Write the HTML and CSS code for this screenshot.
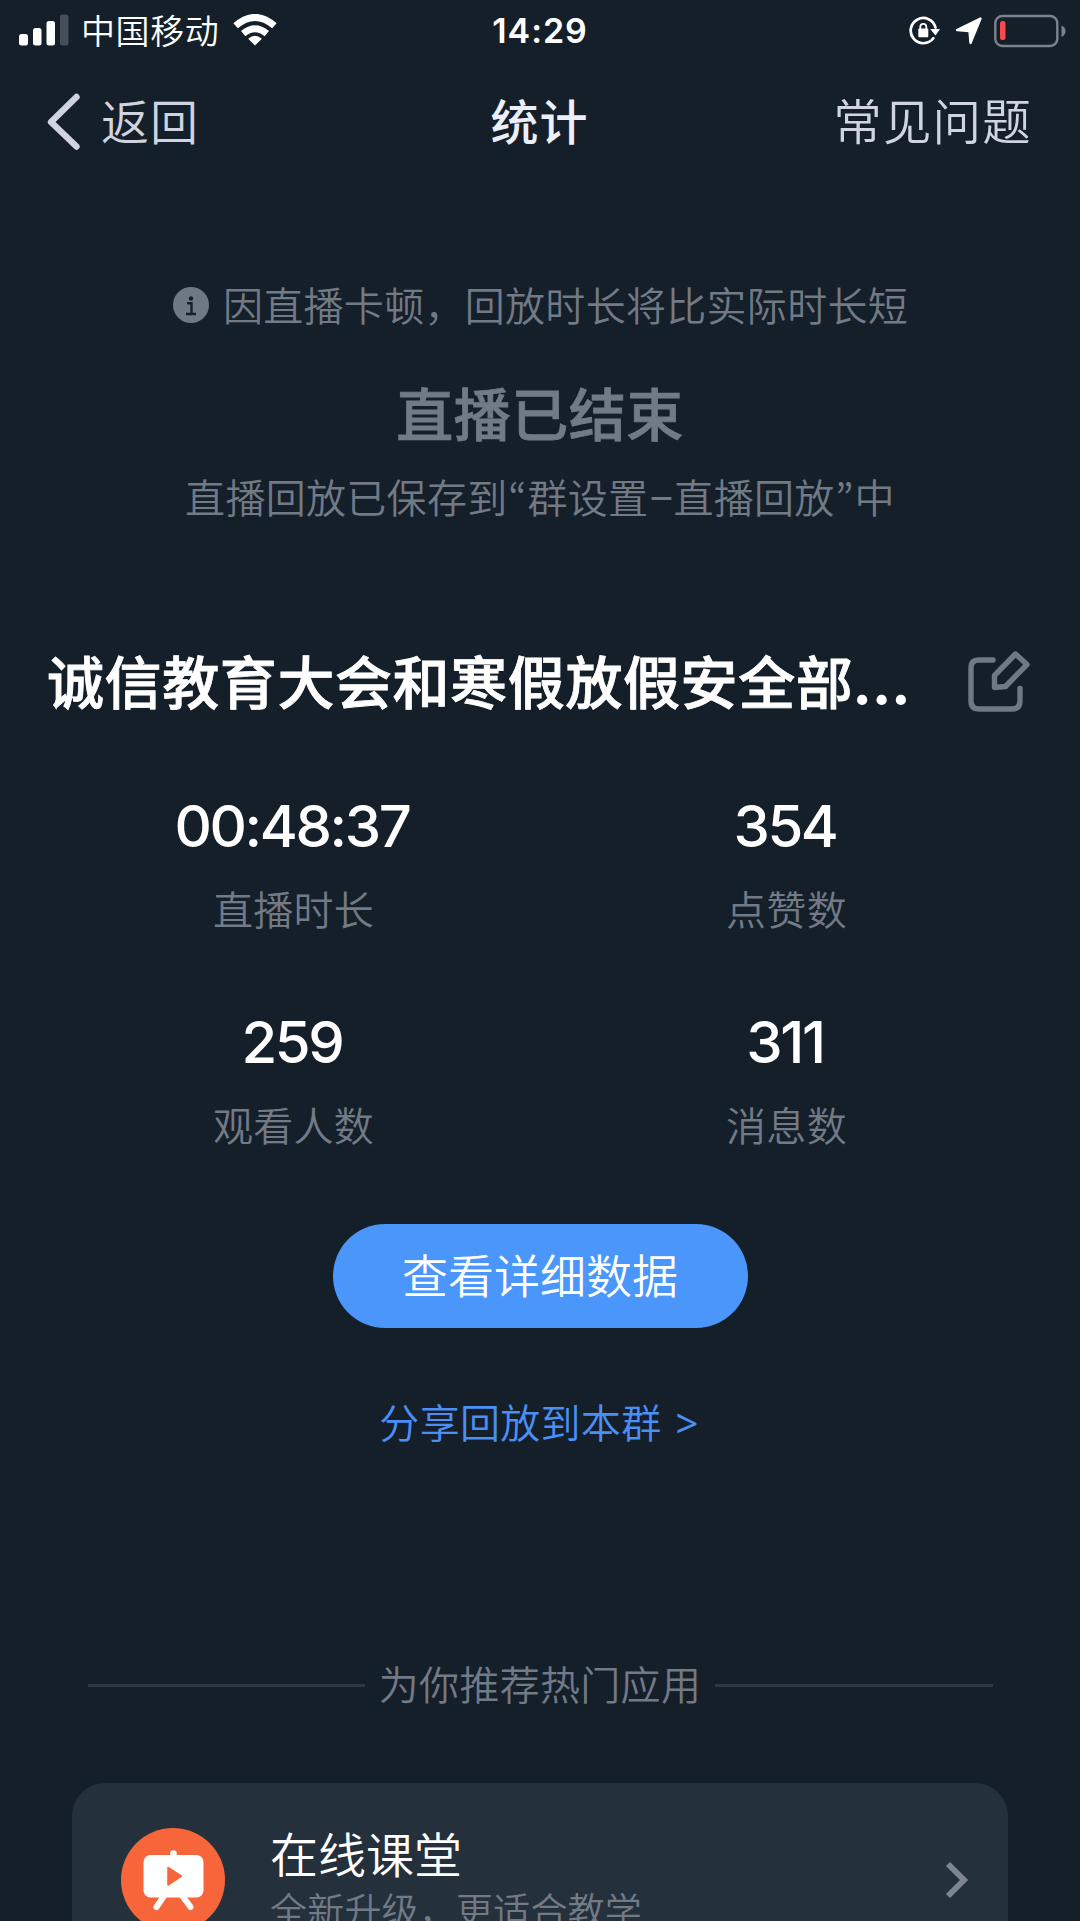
FILE: index.html
```html
<!DOCTYPE html>
<html lang="zh-CN">
<head>
<meta charset="utf-8">
<title>统计</title>
<link rel="stylesheet" href="styles.css">
</head>
<body>
<div class="status">
  <div class="status-left">
    <svg class="signal" width="50" height="32" viewBox="0 0 50 32" fill="#fff"><rect x="0" y="20" width="9" height="11.5" rx="2.5"/><rect x="14" y="14" width="8.5" height="17.500" rx="2.500"/><rect x="27.500" y="7" width="8.500" height="24.500" rx="2.500"/><rect x="41" y="0.500" width="8.500" height="31" rx="2.500" fill="#454e59"/></svg>
    <span class="carrier">中国移动</span>
    <svg width="44" height="32" viewBox="0 0 44 32"><path d="M22 31.500 15.200 24.700Q22 19 28.800 24.700Z" fill="#fff"/><path d="M10.200 19.700Q22 9.700 33.800 19.700" fill="none" stroke="#fff" stroke-width="6.800"/><path d="M2.600 11.800Q22 -5 41.400 11.800" fill="none" stroke="#fff" stroke-width="6.800"/></svg>
  </div>
  <time class="clock">14:29</time>
  <div class="status-right">
    <svg class="lock" width="32" height="30" viewBox="0 0 32 30"><path d="M24.300 22.300A12.600 12.600 0 1 1 26.500 11.500" fill="none" stroke="#fff" stroke-width="2.700" stroke-linecap="round"/><path d="M21.200 13H31L26.500 19.500Z" fill="#fff"/><rect x="9.300" y="12.500" width="10" height="8.800" rx="1" fill="#fff"/><path d="M11.300 13V10.800a3 3 0 0 1 6 0V13" fill="none" stroke="#fff" stroke-width="1.800"/></svg>
    <svg class="arrow" width="28" height="28" viewBox="0 0 28 28"><path d="M25.500 1.500 15.500 26 14.500 14 2 13Z" fill="#fff" stroke="#fff" stroke-width="2.400" stroke-linejoin="round"/></svg>
    <svg width="72" height="34" viewBox="0 0 72 34"><rect x="1.300" y="2" width="62" height="30" rx="7" fill="none" stroke="#7b828c" stroke-width="2.400"/><rect x="6" y="7" width="5.500" height="19" rx="2.500" fill="#fb4a4c"/><path d="M67.500 11.500Q71.500 13 71.500 17T67.500 23Z" fill="#7b828c"/></svg>
  </div>
</div>
<header class="nav">
  <a class="back">
    <svg width="34" height="58" viewBox="0 0 34 58"><path d="M29.500 4 4 29 29.500 53.500" fill="none" stroke="#cfd4e0" stroke-width="6.400" stroke-linecap="round" stroke-linejoin="round"/></svg>
    <span>返回</span>
  </a>
  <h1 class="nav-title">统计</h1>
  <a class="faq">常见问题</a>
</header>
<main>
  <p class="notice">
    <svg width="36" height="36" viewBox="0 0 36 36"><circle cx="18" cy="18" r="18" fill="#6f7985"/><circle cx="18" cy="11.500" r="2.200" fill="#15202b"/><path d="M14 16.300H18.500V26.500M13 27H23" fill="none" stroke="#15202b" stroke-width="2.400"/></svg>
    <span>因直播卡顿，回放时长将比实际时长短</span>
  </p>
  <h2 class="ended">直播已结束</h2>
  <p class="saved">直播回放已保存到<span class="mark">“</span>群设置<span class="dash">–</span>直播回放<span class="mark">”</span>中</p>
  <div class="live">
    <h3>诚信教育大会和寒假放假安全部<span class="dots">...</span></h3>
    <svg width="64" height="64" viewBox="0 0 64 64" fill="none" stroke="#6f7985" stroke-width="5.400" stroke-linecap="round" stroke-linejoin="round"><path d="M26 11H12Q4 11 4 19V52Q4 60 12 60H45Q53 60 53 52V39.500"/><path d="M48.500 5 60 15.500 38.500 37.500 27.500 38.500V26.500Z"/></svg>
  </div>
  <section class="stats">
    <div class="stat"><b>00:48:37</b><span>直播时长</span></div>
    <div class="stat"><b>354</b><span>点赞数</span></div>
    <div class="stat"><b>259</b><span>观看人数</span></div>
    <div class="stat"><b>311</b><span>消息数</span></div>
  </section>
  <button class="detail">查看详细数据</button>
  <a class="share">分享回放到本群<span class="gt">&gt;</span></a>
  <div class="divider"><span>为你推荐热门应用</span></div>
  <article class="card">
    <svg width="104" height="104" viewBox="0 0 104 104"><circle cx="52" cy="52" r="52" fill="#f7663a"/><rect x="22.500" y="27" width="60" height="42.500" rx="7" fill="#fff"/><circle cx="52.500" cy="25.500" r="3.300" fill="#fff"/><path d="M43 68 35.500 79M61.500 68 69.500 79" stroke="#fff" stroke-width="6" stroke-linecap="round"/><path d="M47 39.500V57L60.500 48.200Z" fill="#f7663a" stroke="#f7663a" stroke-width="1.500" stroke-linejoin="round"/></svg>
    <div class="card-text"><strong>在线课堂</strong><span>全新升级，更适合教学</span></div>
    <svg width="26" height="40" viewBox="0 0 26 40"><path d="M4 4 20 20 4 36" fill="none" stroke="#7d8692" stroke-width="5.800"/></svg>
  </article>
</main>
</body>
</html>
```
FILE: styles.css
```css
* { box-sizing: border-box; margin: 0; padding: 0; }
body {
  width: 1080px; height: 1921px; overflow: hidden;
  background: #151f2a; color: #727a86;
  font-family: "Noto Sans CJK SC", sans-serif; font-weight: 350;
}
svg { display: block; flex: none; }
.status {
  height: 60px; padding: 0 14px 0 19px;
  display: grid; grid-template-columns: 1fr auto 1fr; align-items: center;
  color: #fff;
}
.status-left, .status-right { display: flex; align-items: center; }
.status-left { padding-bottom: 2px; }
.carrier { font-size: 34px; letter-spacing: .6px; line-height: 56px; margin: 0 14px 0 12px; }
.clock { font: 600 34px/60px Inter, sans-serif; letter-spacing: .9px; margin-right: 5px; padding-top: 1px; }
.status-right { justify-content: flex-end; }
.arrow { margin: 0 11px 0 14px; }
.nav {
  height: 123px; padding: 0 48px 0 47px;
  display: grid; grid-template-columns: 1fr auto 1fr; align-items: center;
  color: #cfd4e0; font-size: 48px; letter-spacing: .9px; line-height: 72px;
}
.back { display: flex; align-items: center; gap: 20px; }
.back span, .nav-title, .faq { padding-bottom: 5px; }
.nav-title { font-size: 48px; font-weight: 500; color: #eceffa; }
.faq { text-align: right; font-size: 48.5px; letter-spacing: 1.2px; }
main { display: flex; flex-direction: column; align-items: center; }
.notice {
  margin-top: 92px; height: 60px; display: flex; align-items: center; gap: 14px;
  font-size: 40px; letter-spacing: .3px; line-height: 60px; padding-left: 1px;
}
.notice span { padding-bottom: 2px; }
.ended { margin-top: 36px; font-size: 57px; font-weight: 500; line-height: 80px; letter-spacing: .5px; -webkit-text-stroke: .8px; }
.saved { margin-top: 15px; font-size: 40px; line-height: 60px; letter-spacing: .3px; white-space: nowrap; }
.mark, .dash { display: inline-block; width: 20px; line-height: 1; text-align: center; }
.mark { font-family: "Noto Sans CJK KR", sans-serif; }
.dash { width: 25px; font-family: Roboto, sans-serif; font-weight: 400; }
.live { margin-top: 114px; width: 986px; height: 80px; display: flex; align-items: center; justify-content: space-between; }
.live svg { margin: 2px 2px 0 0; }
.live h3 { font-size: 57px; font-weight: 500; line-height: 80px; letter-spacing: .6px; color: #fff; white-space: nowrap; padding-bottom: 3px; -webkit-text-stroke: .8px; }
.dots { font-family: Inter, sans-serif; line-height: 1; letter-spacing: 2.2px; -webkit-text-stroke: 2px; }
.stats { margin-top: 70px; width: 986px; display: grid; grid-template-columns: 1fr 1fr; row-gap: 68px; }
.stat { display: flex; flex-direction: column; align-items: center; }
.stat b { height: 72px; font: 500 58px/72px Inter, sans-serif; letter-spacing: -2.4px; color: #fff; padding-right: 3px; }
.stat span { height: 60px; margin-top: 16px; font-size: 40px; line-height: 60px; letter-spacing: .3px; }
.detail {
  margin-top: 70px; width: 415px; height: 104px; border: 0; border-radius: 52px;
  background: #4a96fb; color: #fff; font: 350 46px/98px "Noto Sans CJK SC", sans-serif;
  padding-bottom: 7px;
}
.share { margin-top: 63px; margin-right: 2px; color: #4a8ff5; font-size: 40px; line-height: 60px; letter-spacing: .3px; }
.gt { display: inline-block; font-family: "Noto Sans", sans-serif; font-weight: 400; line-height: 1; margin-left: 14px; }
.divider { margin-top: 202px; width: 905px; display: flex; align-items: center; gap: 14px; font-size: 40px; line-height: 60px; letter-spacing: .3px; }
.divider::before, .divider::after { content: ""; flex: 1; height: 3px; background: #2c3742; margin-top: 5px; }
.card {
  margin-top: 70px; width: 936px; height: 194px; padding: 0 38px 0 49px;
  display: flex; align-items: center; border-radius: 33px; background: #24303b;
}
.card-text { flex: 1; margin-left: 45px; padding-bottom: 6px; display: flex; flex-direction: column; }
.card-text strong { font-size: 48px; font-weight: 350; line-height: 64px; color: #fff; }
.card-text span { font-size: 37px; line-height: 50px; letter-spacing: .2px; }
```
